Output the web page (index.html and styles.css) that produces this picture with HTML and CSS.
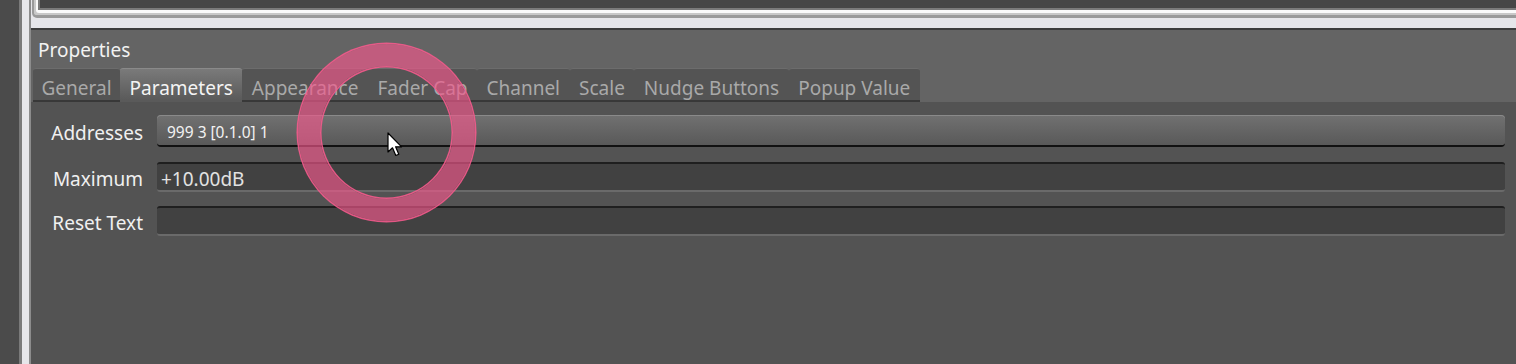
FILE: index.html
```html
<!DOCTYPE html>
<html lang="en">
<head>
    <meta charset="UTF-8">
    <title>Properties</title>
    <link rel="stylesheet" href="styles.css">
</head>
<body>
    <div class="sidebar"></div>
    <div class="splitter"></div>

    <div class="main">
        <!-- bottom edge of the canvas above -->
        <div class="top-frame">
            <div class="frame-outer">
                <div class="frame-white">
                    <div class="frame-inner"></div>
                </div>
            </div>
        </div>

        <div class="panel">
            <div class="panel-title">Properties</div>

            <div class="tabs">
                <div class="tab">General</div>
                <div class="tab active">Parameters</div>
                <div class="tab">Appearance</div>
                <div class="tab">Fader Cap</div>
                <div class="tab">Channel</div>
                <div class="tab">Scale</div>
                <div class="tab">Nudge Buttons</div>
                <div class="tab">Popup Value</div>
            </div>

            <div class="form">
                <div class="row first">
                    <label class="label">Addresses</label>
                    <div class="field button-field">999 3 [0.1.0] 1</div>
                </div>
                <div class="row">
                    <label class="label">Maximum</label>
                    <div class="field text-field">+10.00dB</div>
                </div>
                <div class="row">
                    <label class="label">Reset Text</label>
                    <div class="field text-field"></div>
                </div>
            </div>
        </div>
    </div>

    <!-- click highlight and mouse pointer -->
    <div class="click-ring"></div>
    <svg class="cursor" width="18" height="26" viewBox="0 0 18 26">
        <path d="M1 1 L1 20 L5.5 15.8 L8.8 23.5 L11.8 22.2 L8.6 14.8 L14.6 14.8 Z" fill="#fff" stroke="#000" stroke-width="1.2" stroke-linejoin="round"/>
    </svg>
</body>
</html>
```

FILE: styles.css
```css
body {
    margin: 0;
    height: 364px;
    overflow: hidden;
    display: flex;
    background-color: #4b4b4b;
    font-family: "Noto Sans", "Open Sans", sans-serif;
    user-select: none;
}

.sidebar {
    width: 19px;
    background-color: #4b4b4b;
}

.splitter {
    box-sizing: border-box;
    width: 12px;
    background-color: #e6e6ea;
    border-left: 3px solid #7a7a7a;
    border-right: 2px solid #8c8c8c;
}

.main {
    flex: 1;
    display: flex;
    flex-direction: column;
    min-width: 0;
}

.top-frame {
    box-sizing: border-box;
    height: 30px;
    padding-left: 1px;
    background-color: #e6e6ea;
    border-bottom: 2px solid #3d3d3d;
}

.frame-outer {
    border-left: 2px solid #9a9a9a;
    border-bottom: 3px solid #9a9a9a;
    border-bottom-left-radius: 5px;
    padding: 0 0 2px 2px;
    background-color: #c8c8c8;
}

.frame-white {
    border-left: 2px solid #fafafa;
    border-bottom: 3px solid #fafafa;
    border-bottom-left-radius: 3px;
}

.frame-inner {
    height: 8px;
    background-color: #464646;
    border-left: 2px solid #7a7a7a;
    border-bottom: 2px solid #7a7a7a;
}

.panel {
    flex: 1;
    background-color: #535353;
}

.panel-title {
    height: 38px;
    box-sizing: border-box;
    padding: 8px 0 0 7px;
    background-color: #646464;
    color: #f2f2f2;
    font-size: 19px;
    line-height: 24px;
}

.tabs {
    display: flex;
    height: 34px;
    padding-left: 2px;
    background-color: #646464;
}

.tab {
    box-sizing: border-box;
    height: 34px;
    padding: 7px 9.5px 0;
    background-color: #545454;
    border-top: 1px solid #6c6c6c;
    border-bottom: 2px solid #383838;
    border-radius: 3px 3px 0 0;
    color: #a9a9a9;
    font-size: 19px;
    line-height: 24px;
    white-space: nowrap;
}

.tab:first-child {
    padding: 7px 8.5px 0;
}

.tab.active {
    background: linear-gradient(#7a7a7a, #5a5a5a);
    border-top-color: #8a8a8a;
    border-bottom-color: #5a5a5a;
    color: #f4f4f4;
}

.form {
    padding: 13px 11px 0 0;
}

.row {
    display: flex;
    align-items: center;
    gap: 14px;
    height: 30px;
    margin-bottom: 14px;
}

.row.first {
    height: 32px;
    margin-bottom: 15px;
}

.label {
    width: 112px;
    padding-top: 4px;
    text-align: right;
    color: #f0f0f0;
    font-size: 19px;
}

.field {
    flex: 1;
    box-sizing: border-box;
    height: 100%;
    display: flex;
    align-items: center;
}

.button-field {
    padding: 3px 0 0 10px;
    background: linear-gradient(#717171, #595959);
    border-radius: 4px;
    border-bottom: 2px solid #111;
    box-shadow: inset 0 1px 0 #8a8a8a;
    color: #f2f2f2;
    font-size: 15.5px;
}

.text-field {
    padding: 4px 0 0 4px;
    background-color: #414141;
    border-top: 2px solid #1f1f1f;
    border-bottom: 2px solid #6a6a6a;
    border-radius: 3px;
    color: #e2e2e2;
    font-size: 19px;
}

.click-ring {
    position: absolute;
    left: 298px;
    top: 44px;
    width: 133px;
    height: 133px;
    border: 22px solid rgba(242, 88, 140, 0.66);
    border-radius: 50%;
    box-shadow: 0 0 0 1.5px rgba(244, 90, 140, 0.9), inset 0 0 0 1.5px rgba(244, 90, 140, 0.9);
}

.cursor {
    position: absolute;
    left: 387px;
    top: 132px;
}
```
